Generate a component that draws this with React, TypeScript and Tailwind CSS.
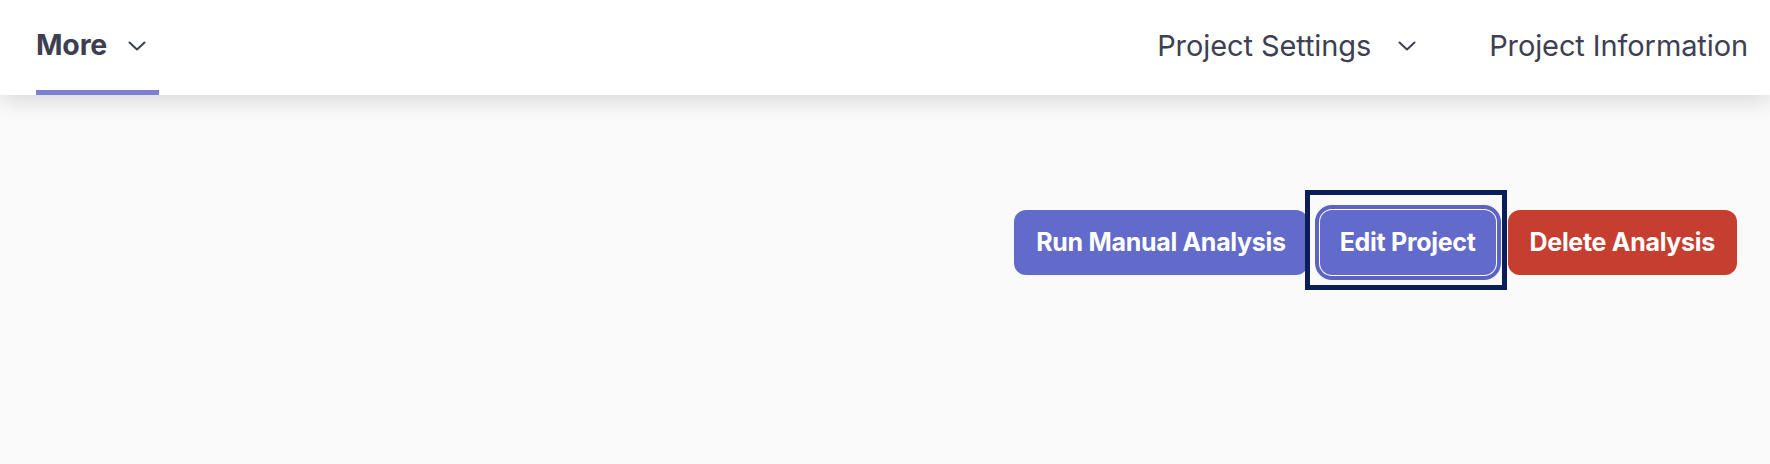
import React from "react";

const Chevron = () => (
  <svg width="18" height="10" viewBox="0 0 18 10" fill="none" className="shrink-0">
    <polyline points="1.5,1.5 9,8.5 16.5,1.5" stroke="#3d4052" strokeWidth="2" strokeLinecap="round" strokeLinejoin="round" />
  </svg>
);

export default function App() {
  return (
    <div className="w-[1770px] h-[464px] bg-[#fafafa] overflow-hidden" style={{ fontFamily: "Inter, 'Noto Sans', sans-serif" }}>
      <header className="relative z-10 h-[95px] bg-white shadow-[0_4px_22px_rgba(20,20,40,0.16)] flex items-stretch justify-between pl-[36px] pr-[22px]">
        <div className="relative flex items-center gap-[21px] pr-[13px] pb-[4px]">
          <span className="text-[28.5px] font-bold text-[#3c3f52] tracking-[-0.2px]">More</span>
          <Chevron />
          <span className="absolute left-0 right-0 bottom-0 h-[5px] bg-[#7b80d3]" />
        </div>
        <div className="flex items-center pb-[4px] text-[29px] text-[#3d4052] tracking-[-0.1px]">
          <div className="flex items-center gap-[27px]">
            <span>Project Settings</span>
            <Chevron />
          </div>
          <span className="ml-[73px]">Project Information</span>
        </div>
      </header>
      <div className="flex justify-end items-center gap-[12px] pt-[115px] pr-[33px]">
        <button className="h-[65px] px-[22px] rounded-xl bg-[#626bca] text-white text-[25px] font-bold tracking-[-0.3px]">
          Run Manual Analysis
        </button>
        <div className="relative">
          <button className="h-[65px] px-[20px] rounded-xl bg-[#626bca] text-white text-[25px] font-bold tracking-[-0.3px] shadow-[0_0_0_1px_#ffffff,0_0_0_5px_#5b63c4]">
            Edit Project
          </button>
          <span className="pointer-events-none absolute left-[-15px] right-[-11px] top-[-20px] bottom-[-15px] border-[5px] border-[#0c1e57]" />
        </div>
        <button className="h-[65px] px-[22px] rounded-xl bg-[#c53e2f] text-white text-[25px] font-bold tracking-[-0.3px]">
          Delete Analysis
        </button>
      </div>
    </div>
  );
}
